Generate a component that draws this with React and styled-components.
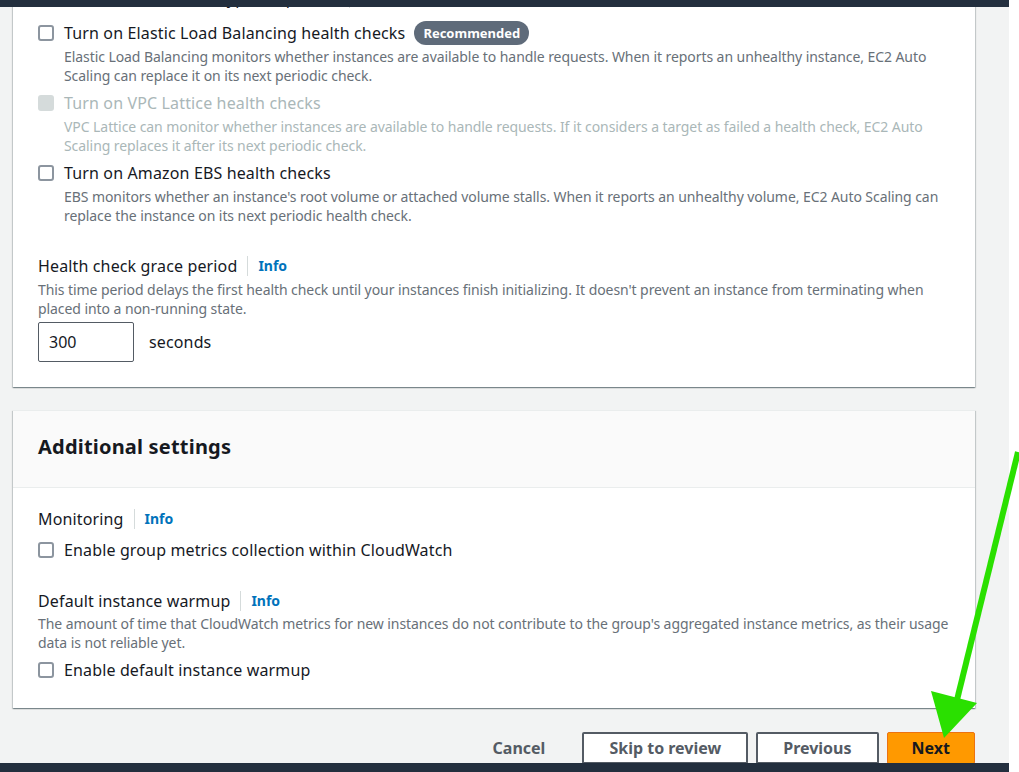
import React from 'react';
import styled, { createGlobalStyle } from 'styled-components';

const GlobalStyle = createGlobalStyle`
  html, body {
    margin: 0;
    padding: 0;
    background: #ffffff;
  }
  body {
    font-family: "Noto Sans", "Open Sans", Arial, sans-serif;
    color: #16191f;
  }
`;

const Screen = styled.div`
  position: relative;
  width: 1019px;
  height: 772px;
  display: flex;
  overflow: hidden;
  background: #ffffff;
`;

const Main = styled.div`
  width: 1009px;
  height: 100%;
  display: flex;
  flex-direction: column;
  background: #f2f3f3;
`;

const DarkBar = styled.div`
  flex-shrink: 0;
  height: ${(p) => p.h}px;
  background: #232f3e;
  position: relative;
  z-index: 2;
`;

const Scroll = styled.div`
  flex: 1;
  min-height: 0;
  overflow: hidden;
  padding: 0 34px 0 13px;
`;

const Panel = styled.section`
  background: #ffffff;
  border-top: 1px solid #eaeded;
  box-shadow: 0 1px 1px 0 rgba(0, 28, 36, 0.3), 1px 1px 1px 0 rgba(0, 28, 36, 0.15),
    -1px 1px 1px 0 rgba(0, 28, 36, 0.15);
  margin-top: ${(p) => p.mt || 0}px;
`;

const PanelBody = styled.div`
  padding: ${(p) => p.pad};
  display: flex;
  flex-direction: column;
`;

const PanelHeader = styled.div`
  background: #fafafa;
  border-bottom: 1px solid #eaeded;
  padding: 21px 25px 25px;
`;

const Heading = styled.h2`
  margin: 0;
  font-size: 20px;
  line-height: 30px;
  font-weight: 700;
  letter-spacing: 0.2px;
  color: #16191f;
`;

const FieldLabel = styled.div`
  display: flex;
  align-items: center;
  font-size: 16px;
  line-height: 24px;
  letter-spacing: 0.14px;
  color: #16191f;
  margin-top: ${(p) => p.mt || 0}px;
`;

const Divider = styled.span`
  display: inline-block;
  width: 1px;
  height: 20px;
  background: #d5dbdb;
  margin: 0 10px;
`;

const InfoLink = styled.a`
  font-size: 14px;
  font-weight: 700;
  letter-spacing: 0;
  color: #0073bb;
  text-decoration: none;
`;

const Desc = styled.div`
  font-size: 14px;
  line-height: 19px;
  letter-spacing: -0.07px;
  color: ${(p) => (p.disabled ? '#aab7b8' : '#687078')};
  margin-top: ${(p) => p.mt || 0}px;
`;

const Option = styled.div`
  display: flex;
  flex-direction: column;
  margin-top: ${(p) => p.mt || 0}px;
`;

const CheckRow = styled.label`
  display: flex;
  align-items: center;
  font-size: 16px;
  line-height: 24px;
  letter-spacing: 0.14px;
  color: ${(p) => (p.disabled ? '#aab7b8' : '#16191f')};
  margin-top: ${(p) => p.mt || 0}px;
`;

const Box = styled.span`
  flex-shrink: 0;
  width: 16px;
  height: 16px;
  box-sizing: border-box;
  border-radius: 3px;
  border: ${(p) => (p.disabled ? 'none' : '2px solid #8c959f')};
  background: ${(p) => (p.disabled ? '#d5dbdb' : '#ffffff')};
  margin-right: 10px;
`;

const OptionDesc = styled(Desc)`
  padding-left: 26px;
  margin-top: 2px;
`;

const Badge = styled.span`
  display: inline-flex;
  align-items: center;
  height: 24px;
  padding: 0 9px;
  margin-left: 9px;
  border-radius: 12px;
  background: #5f6b7a;
  color: #ffffff;
  font-size: 13px;
  font-weight: 700;
  letter-spacing: 0;
`;

const InputRow = styled.div`
  display: flex;
  align-items: center;
  gap: 15px;
  margin-top: 4px;
`;

const NumberInput = styled.div`
  width: 96px;
  height: 40px;
  box-sizing: border-box;
  border: 1px solid #545b64;
  border-radius: 2px;
  padding: 0 10px;
  display: flex;
  align-items: center;
  font-size: 16px;
`;

const Unit = styled.span`
  font-size: 16px;
  letter-spacing: 0.14px;
`;

const Actions = styled.div`
  display: flex;
  justify-content: flex-end;
  align-items: flex-start;
  gap: 8px;
  margin-top: 24px;
`;

const Button = styled.button`
  font-family: inherit;
  font-size: 16px;
  font-weight: 700;
  height: 32px;
  padding: 0 ${(p) => (p.primary ? 24 : 25)}px;
  border-radius: 2px;
  cursor: pointer;
  border: ${(p) =>
    p.link ? '2px solid transparent' : p.primary ? '1px solid #ec7211' : '2px solid #545b64'};
  background: ${(p) => (p.link ? 'transparent' : p.primary ? '#ff9900' : '#ffffff')};
  color: ${(p) => (p.primary ? '#16191f' : '#545b64')};
  margin-right: ${(p) => (p.link ? 2 : 0)}px;
`;

const Overlay = styled.svg`
  position: absolute;
  left: 0;
  top: 0;
  pointer-events: none;
  z-index: 5;
`;

const options = [
  {
    label: 'Turn on Elastic Load Balancing health checks',
    badge: 'Recommended',
    desc: 'Elastic Load Balancing monitors whether instances are available to handle requests. When it reports an unhealthy instance, EC2 Auto Scaling can replace it on its next periodic check.',
  },
  {
    label: 'Turn on VPC Lattice health checks',
    disabled: true,
    desc: 'VPC Lattice can monitor whether instances are available to handle requests. If it considers a target as failed a health check, EC2 Auto Scaling replaces it after its next periodic check.',
  },
  {
    label: 'Turn on Amazon EBS health checks',
    desc: "EBS monitors whether an instance's root volume or attached volume stalls. When it reports an unhealthy volume, EC2 Auto Scaling can replace the instance on its next periodic health check.",
  },
];

const App = () => {
  return (
    <>
      <GlobalStyle />
      <Screen>
        <Main>
          <DarkBar h={7} />
          <Scroll>
            <Panel mt={-42}>
              <PanelBody pad="20px 24px 25px 25px">
                <FieldLabel>
                  Additional health check types - optional
                  <Divider />
                  <InfoLink>Info</InfoLink>
                </FieldLabel>
                {options.map((o, i) => (
                  <Option key={o.label} mt={i === 0 ? 11 : 6}>
                    <CheckRow disabled={o.disabled}>
                      <Box disabled={o.disabled} />
                      {o.label}
                      {o.badge && <Badge>{o.badge}</Badge>}
                    </CheckRow>
                    <OptionDesc disabled={o.disabled}>{o.desc}</OptionDesc>
                  </Option>
                ))}
                <FieldLabel mt={29}>
                  Health check grace period
                  <Divider />
                  <InfoLink>Info</InfoLink>
                </FieldLabel>
                <Desc mt={2}>
                  This time period delays the first health check until your instances finish
                  initializing. It doesn't prevent an instance from terminating when placed into a
                  non-running state.
                </Desc>
                <InputRow>
                  <NumberInput>300</NumberInput>
                  <Unit>seconds</Unit>
                </InputRow>
              </PanelBody>
            </Panel>

            <Panel mt={23}>
              <PanelHeader>
                <Heading>Additional settings</Heading>
              </PanelHeader>
              <PanelBody pad="19px 24px 26px 25px">
                <FieldLabel>
                  Monitoring
                  <Divider />
                  <InfoLink>Info</InfoLink>
                </FieldLabel>
                <CheckRow mt={7}>
                  <Box />
                  Enable group metrics collection within CloudWatch
                </CheckRow>
                <FieldLabel mt={27}>
                  Default instance warmup
                  <Divider />
                  <InfoLink>Info</InfoLink>
                </FieldLabel>
                <Desc mt={1}>
                  The amount of time that CloudWatch metrics for new instances do not contribute to
                  the group's aggregated instance metrics, as their usage data is not reliable yet.
                </Desc>
                <CheckRow mt={6}>
                  <Box />
                  Enable default instance warmup
                </CheckRow>
              </PanelBody>
            </Panel>

            <Actions>
              <Button link>Cancel</Button>
              <Button>Skip to review</Button>
              <Button>Previous</Button>
              <Button primary>Next</Button>
            </Actions>
          </Scroll>
          <DarkBar h={9} />
        </Main>
        <Overlay width="1019" height="772" viewBox="0 0 1019 772">
          <line x1="1018" y1="452" x2="955" y2="708" stroke="#2ae000" strokeWidth="6" />
          <polygon points="931,691 977,703 944,738" fill="#2ae000" />
        </Overlay>
      </Screen>
    </>
  );
};

export default App;
